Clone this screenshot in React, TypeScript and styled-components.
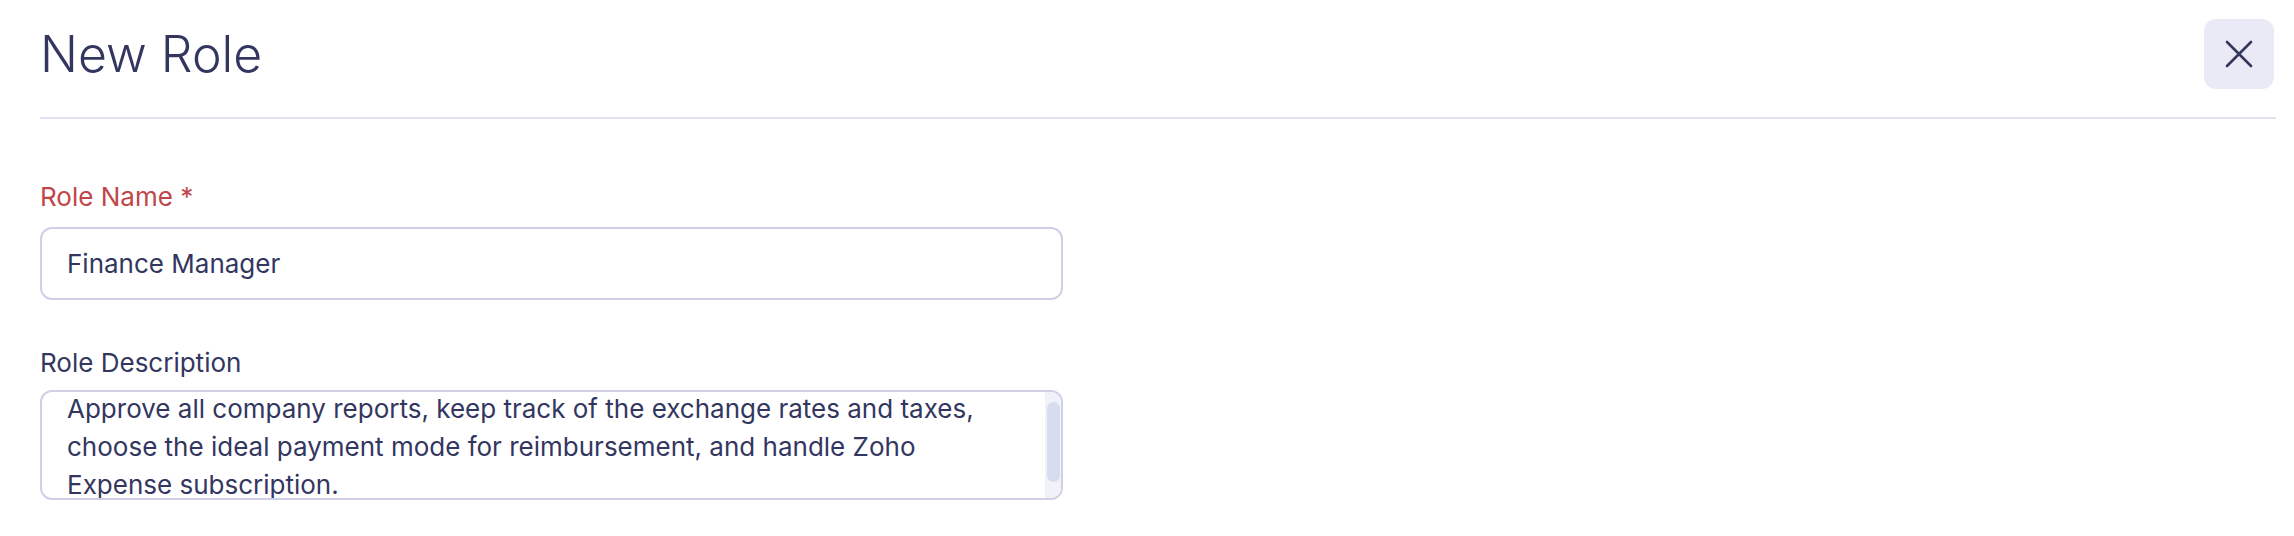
import React, { useLayoutEffect, useRef, useState } from "react";
import styled, { createGlobalStyle } from "styled-components";

const GlobalStyle = createGlobalStyle`
  body {
    margin: 0;
    background: #ffffff;
    font-family: Inter, "Noto Sans", sans-serif;
    color: #33375f;
  }
`;

const Panel = styled.div`
  padding: 0 18px 0 40px;
`;

const Header = styled.div`
  display: flex;
  align-items: center;
  justify-content: space-between;
  height: 119px;
  border-bottom: 2px solid #dfe1f3;
  padding: 2px 0 12px;
  box-sizing: border-box;
`;

const Title = styled.h1`
  margin: 0;
  font-size: 50px;
  font-weight: 300;
  color: #33375f;
`;

const CloseButton = styled.button`
  width: 70px;
  height: 70px;
  border: none;
  border-radius: 12px;
  background: #e9eaf6;
  display: flex;
  align-items: center;
  justify-content: center;
  padding: 0;
  margin-right: 2px;
  cursor: pointer;
`;

const Form = styled.div`
  width: 1023px;
  padding-top: 60px;
  display: flex;
  flex-direction: column;
  gap: 45px;
`;

const Field = styled.div`
  display: flex;
  flex-direction: column;
`;

const Label = styled.label<{ $required?: boolean }>`
  font-size: 26px;
  line-height: 36px;
  margin-bottom: ${(p) => (p.$required ? "12px" : "9px")};
  color: ${(p) => (p.$required ? "#c0464a" : "#33375f")};
`;

const TextInput = styled.input`
  box-sizing: border-box;
  height: 73px;
  border: 2px solid #cfd0e5;
  border-radius: 12px;
  padding: 0 25px;
  font-family: Inter, "Noto Sans", sans-serif;
  font-size: 26px;
  color: #33375f;
  outline: none;
`;

const AreaBox = styled.div`
  box-sizing: border-box;
  height: 110px;
  display: flex;
  border: 2px solid #cfd0e5;
  border-radius: 12px;
  overflow: hidden;
`;

const TextArea = styled.textarea`
  flex: 1;
  border: none;
  padding: 14px 20px 14px 25px;
  font-family: Inter, "Noto Sans", sans-serif;
  font-size: 26px;
  line-height: 38px;
  color: #33375f;
  outline: none;
  resize: none;
  overflow: hidden;
  background: transparent;
`;

const ScrollTrack = styled.div`
  width: 16px;
  box-sizing: border-box;
  padding: 10px 1px 16px 2px;
  background: #f1f1fa;
  display: flex;
`;

const ScrollThumb = styled.div`
  flex: 1;
  background: #d8dcef;
  border-radius: 7px;
`;

export default function App() {
  const [name, setName] = useState("Finance Manager");
  const [desc, setDesc] = useState(
    "Approve all company reports, keep track of the exchange rates and taxes, choose the ideal payment mode for reimbursement, and handle Zoho Expense subscription."
  );
  const areaRef = useRef<HTMLTextAreaElement>(null);

  useLayoutEffect(() => {
    if (areaRef.current) areaRef.current.scrollTop = 16;
  }, []);

  return (
    <>
      <GlobalStyle />
      <Panel>
        <Header>
          <Title>New Role</Title>
          <CloseButton aria-label="Close">
            <svg width="28" height="28" viewBox="0 0 28 28" fill="none">
              <path
                d="M2 2L26 26M26 2L2 26"
                stroke="#33375f"
                strokeWidth="2.6"
                strokeLinecap="round"
              />
            </svg>
          </CloseButton>
        </Header>
        <Form>
          <Field>
            <Label $required>Role Name *</Label>
            <TextInput value={name} onChange={(e) => setName(e.target.value)} />
          </Field>
          <Field>
            <Label>Role Description</Label>
            <AreaBox>
              <TextArea
                ref={areaRef}
                value={desc}
                onChange={(e) => setDesc(e.target.value)}
              />
              <ScrollTrack>
                <ScrollThumb />
              </ScrollTrack>
            </AreaBox>
          </Field>
        </Form>
      </Panel>
    </>
  );
}
